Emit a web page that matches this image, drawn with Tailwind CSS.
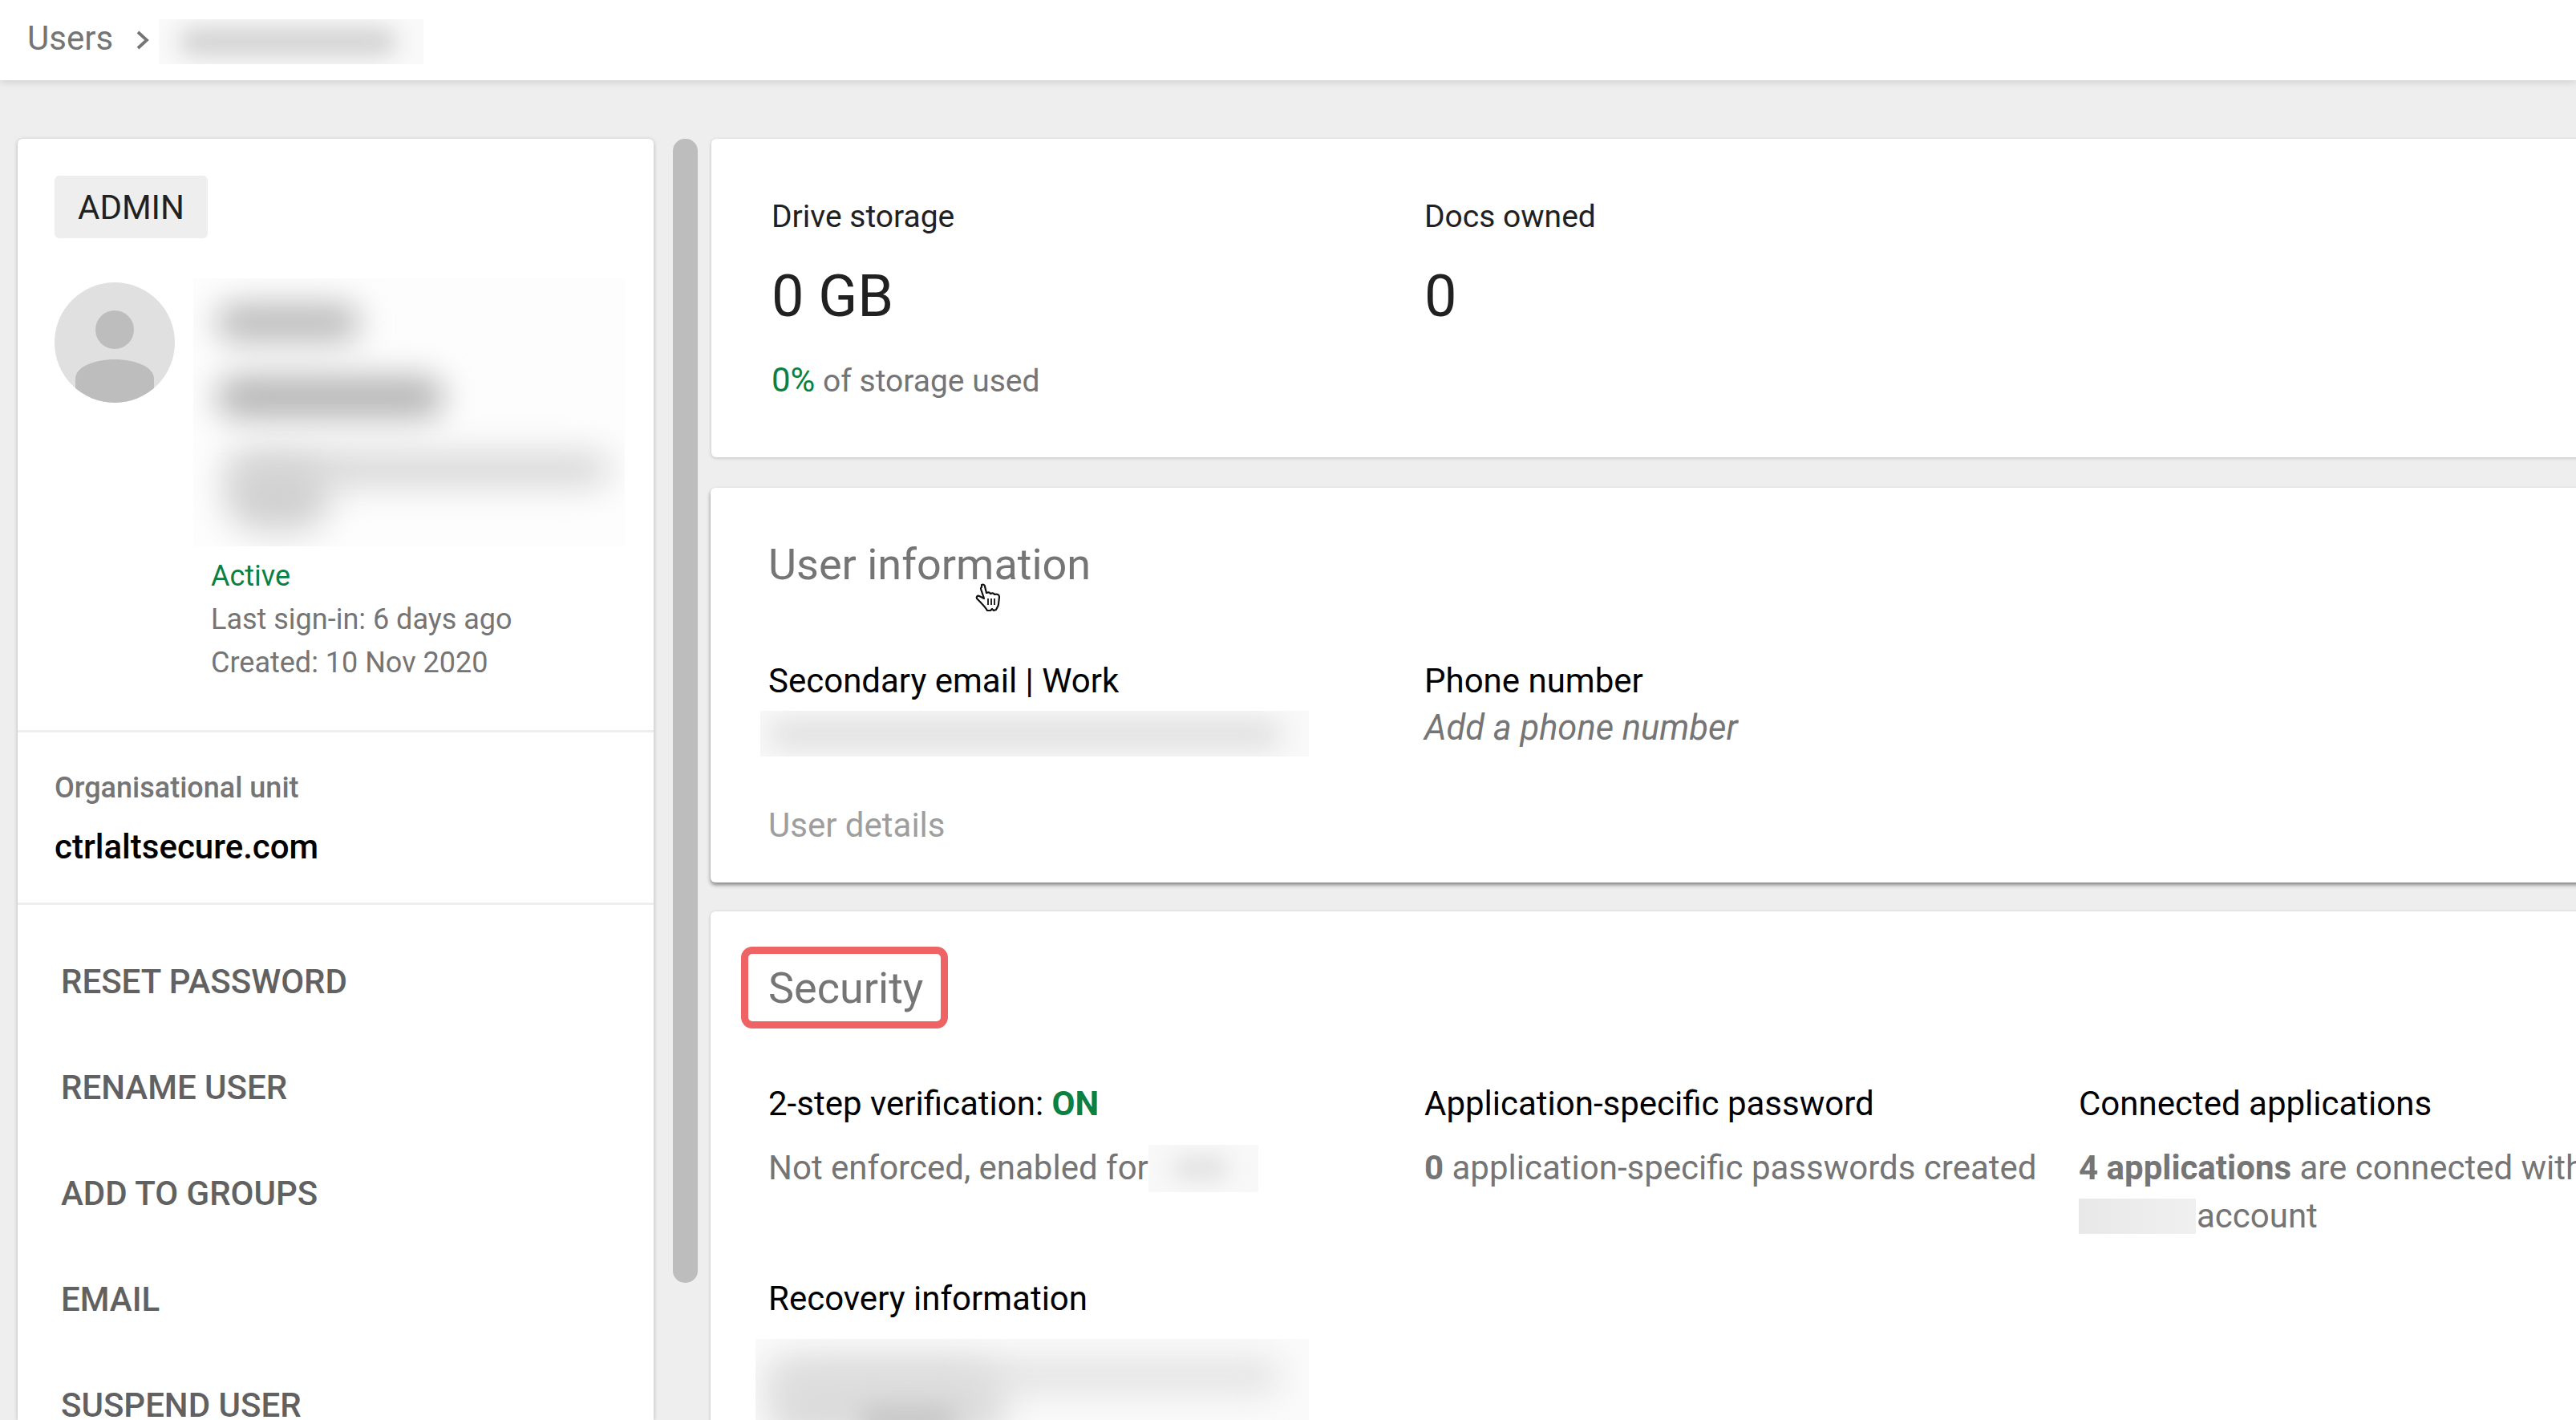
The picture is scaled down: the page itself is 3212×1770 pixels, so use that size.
<!DOCTYPE html>
<html lang="en">
  <head>
    <meta charset="UTF-8" />
    <meta name="viewport" content="width=device-width, initial-scale=1.0" />
    <title>Users</title>
    <script src="https://cdn.jsdelivr.net/npm/@tailwindcss/browser@4"></script>
  </head>
  <body class="w-[3212px] h-[1770px] overflow-hidden bg-[#eeeeee] font-['Roboto',sans-serif] relative">
    <!-- Breadcrumb -->
    <header class="h-[100px] bg-white shadow-[0_2px_10px_rgba(0,0,0,0.14)] flex items-center pl-[34px] pb-[4px] relative z-10">
      <span class="text-[42px] leading-none text-[#757575]">Users</span>
      <svg class="ml-[29px] w-[16px] h-[24px] mt-[4px]" viewBox="0 0 16 24" fill="none" stroke="#757575" stroke-width="3.8"><path d="M2 2l11 10L2 22" /></svg>
      <div class="ml-[12px] mt-[8px] w-[330px] h-[56px] bg-[#f9f9f9] overflow-hidden relative">
        <div class="absolute left-[26px] top-[12px] w-[270px] h-[32px] bg-[#cfcfcf] rounded-full blur-[14px]"></div>
      </div>
    </header>

    <main class="h-[1670px] overflow-hidden flex items-start pt-[73px]">
      <!-- Left card -->
      <aside class="ml-[22px] w-[793px] h-[1597px] overflow-hidden bg-white rounded-t-[6px] shadow-[0_1px_5px_rgba(0,0,0,0.25)] shrink-0">
        <div class="h-[740px] pt-[46px] pl-[46px] border-b-[3px] border-[#eeeeee]">
          <div class="w-[191px] h-[78px] rounded-[6px] bg-[#eeeeee] flex items-center justify-center text-[42px] text-[#212121]">ADMIN</div>
          <div class="flex mt-[50px]">
            <div class="w-[150px] h-[150px] mt-[5px] rounded-full bg-[#e0e0e0] overflow-hidden shrink-0">
              <svg viewBox="0 0 150 150" class="w-full h-full"><circle cx="75" cy="59" r="24" fill="#bdbdbd" /><path d="M26 150V120C26 105 50 96 75 96s49 9 49 24v30z" fill="#bdbdbd" /></svg>
            </div>
            <div class="ml-[23px]">
              <div class="w-[538px] h-[334px] bg-[#fdfdfd] overflow-hidden relative">
                <div class="absolute left-[28px] top-[32px] w-[180px] h-[46px] bg-[#b8b8b8] rounded-full blur-[20px]"></div>
                <div class="absolute left-[28px] top-[122px] w-[285px] h-[52px] bg-[#b4b4b4] rounded-full blur-[20px]"></div>
                <div class="absolute left-[40px] top-[218px] w-[480px] h-[40px] bg-[#d4d4d4] rounded-full blur-[22px]"></div>
                <div class="absolute left-[40px] top-[230px] w-[130px] h-[85px] bg-[#d0d0d0] rounded-full blur-[22px]"></div>
              </div>
              <div class="pl-[22px] pt-[10px] text-[36px] leading-[54px] text-[#757575]">
                <div class="text-[#0b8043]">Active</div>
                <div>Last sign-in: 6 days ago</div>
                <div>Created: 10 Nov 2020</div>
              </div>
            </div>
          </div>
        </div>
        <div class="h-[215px] pl-[46px] pt-[47px] border-b-[3px] border-[#eeeeee]">
          <div class="text-[36px] leading-[44px] font-medium text-[#757575]">Organisational unit</div>
          <div class="mt-[29px] text-[42px] leading-[46px] font-medium text-black">ctrlaltsecure.com</div>
        </div>
        <nav class="pl-[54px] pt-[63px] text-[42px] leading-[66px] font-medium text-[#616161] flex flex-col gap-[66px]">
          <a>RESET PASSWORD</a>
          <a>RENAME USER</a>
          <a>ADD TO GROUPS</a>
          <a>EMAIL</a>
          <a>SUSPEND USER</a>
        </nav>
      </aside>

      <!-- Scrollbar -->
      <div class="ml-[24px] w-[31px] h-[1426px] rounded-[15px] bg-[#bdbdbd] shrink-0"></div>

      <!-- Right column -->
      <section class="ml-[16px] w-[2400px] shrink-0">
        <!-- Storage -->
        <div class="ml-[1px] h-[397px] bg-white rounded-[6px] shadow-[0_1px_4px_rgba(0,0,0,0.2)] pl-[75px] pt-[74px] grid grid-cols-[814px_1fr]">
          <div>
            <div class="text-[39px] leading-[46px] text-[#212121]">Drive storage</div>
            <div class="mt-[35px] text-[72px] leading-[84px] text-[#212121]">0 GB</div>
            <div class="mt-[39px] text-[39px] leading-[46px] text-[#757575]"><span class="text-[42px] text-[#0b8043]">0%</span> of storage used</div>
          </div>
          <div>
            <div class="text-[39px] leading-[46px] text-[#212121]">Docs owned</div>
            <div class="mt-[35px] text-[72px] leading-[84px] text-[#212121]">0</div>
          </div>
        </div>

        <!-- User information -->
        <div class="mt-[38px] h-[492px] bg-white rounded-[6px] shadow-[0_3px_5px_rgba(0,0,0,0.45)] pl-[72px] pt-[63px]">
          <div class="text-[54px] leading-[66px] text-[#757575]">User information</div>
          <div class="mt-[87px] grid grid-cols-[818px_1fr]">
            <div class="relative">
              <div class="text-[42px] leading-[50px] text-black">Secondary email | Work</div>
              <div class="absolute -left-[10px] top-[62px] w-[684px] h-[57px] bg-[#f9f9f9] overflow-hidden">
                <div class="absolute left-[10px] top-[12px] w-[640px] h-[34px] bg-[#dedede] rounded-full blur-[17px]"></div>
              </div>
            </div>
            <div>
              <div class="text-[42px] leading-[50px] text-black">Phone number</div>
              <div class="mt-[9px] text-[43.5px] leading-[50px] italic text-[#757575]">Add a phone number</div>
            </div>
          </div>
          <div class="mt-[71px] text-[42px] leading-[50px] text-[#9e9e9e]">User details</div>
        </div>

        <!-- Security -->
        <div class="mt-[36px] h-[800px] bg-white rounded-[6px] shadow-[0_1px_4px_rgba(0,0,0,0.2)] pl-[72px] pt-[63px]">
          <div class="relative text-[54px] leading-[66px] text-[#757575]">
            Security
            <div class="absolute -left-[34px] -top-[19px] w-[258px] h-[102px] border-[9px] border-[#ee6363] rounded-[14px]"></div>
          </div>
          <div class="mt-[86px] grid grid-cols-[818px_816px_1fr] text-[42px] leading-[50px]">
            <div>
              <div class="text-black">2-step verification: <span class="font-bold text-[#0b8043]">ON</span></div>
              <div class="mt-[30px] text-[#757575] flex items-center whitespace-nowrap">
                Not enforced, enabled for
                <div class="-my-[5px] w-[137px] h-[59px] bg-[#f8f8f8] overflow-hidden relative">
                  <div class="absolute left-[30px] top-[14px] w-[70px] h-[30px] bg-[#e2e2e2] rounded-full blur-[13px]"></div>
                </div>
              </div>
            </div>
            <div>
              <div class="text-black">Application-specific password</div>
              <div class="mt-[30px] text-[#757575] whitespace-nowrap"><b class="font-bold">0</b> application-specific passwords created</div>
            </div>
            <div>
              <div class="text-black">Connected applications</div>
              <div class="mt-[30px] text-[#757575] whitespace-nowrap"><b class="font-bold">4 applications</b> are connected with</div>
              <div class="mt-[10px] text-[#757575] flex items-center whitespace-nowrap">
                <div class="w-[146px] h-[44px] bg-gradient-to-r from-[#e8e8e8] to-[#f0f0f0] mr-[1px]"></div>
                account
              </div>
            </div>
          </div>
          <div class="mt-[53px] text-[42px] leading-[50px] text-black">Recovery information</div>
          <div class="relative -ml-[16px] mt-[25px] w-[690px] h-[102px] bg-[#fafafa] overflow-hidden">
            <div class="absolute left-[14px] top-[26px] w-[640px] h-[40px] bg-[#e2e2e2] rounded-full blur-[20px]"></div>
            <div class="absolute left-[14px] top-[30px] w-[300px] h-[100px] bg-[#dcdcdc] rounded-full blur-[20px]"></div>
            <div class="absolute left-[130px] top-[82px] w-[120px] h-[40px] bg-[#c8c8c8] rounded-full blur-[14px]"></div>
          </div>
        </div>
      </section>
    </main>

    <!-- Mouse pointer -->
    <svg class="absolute left-[1215px] top-[727px] w-[34px] h-[36px]" viewBox="0 0 34 36">
      <path d="M9 2c2-1 4 0 4 2l2 8c2-1 4-1 5 1 2-1 4-1 5 1 3-1 6 0 6 3l-1 9c0 3-2 4-3 7l-3 1-2-2-2 2h-4c-2-4-7-9-13-15-1-2 1-4 3-3l6 3-4-12c0-1 0-2 1-2z" fill="#fff" stroke="#111" stroke-width="2.2" stroke-linejoin="round" />
      <path d="M17 19v8M21 19v8M25 19v8" stroke="#111" stroke-width="1.8" />
    </svg>
  </body>
</html>
